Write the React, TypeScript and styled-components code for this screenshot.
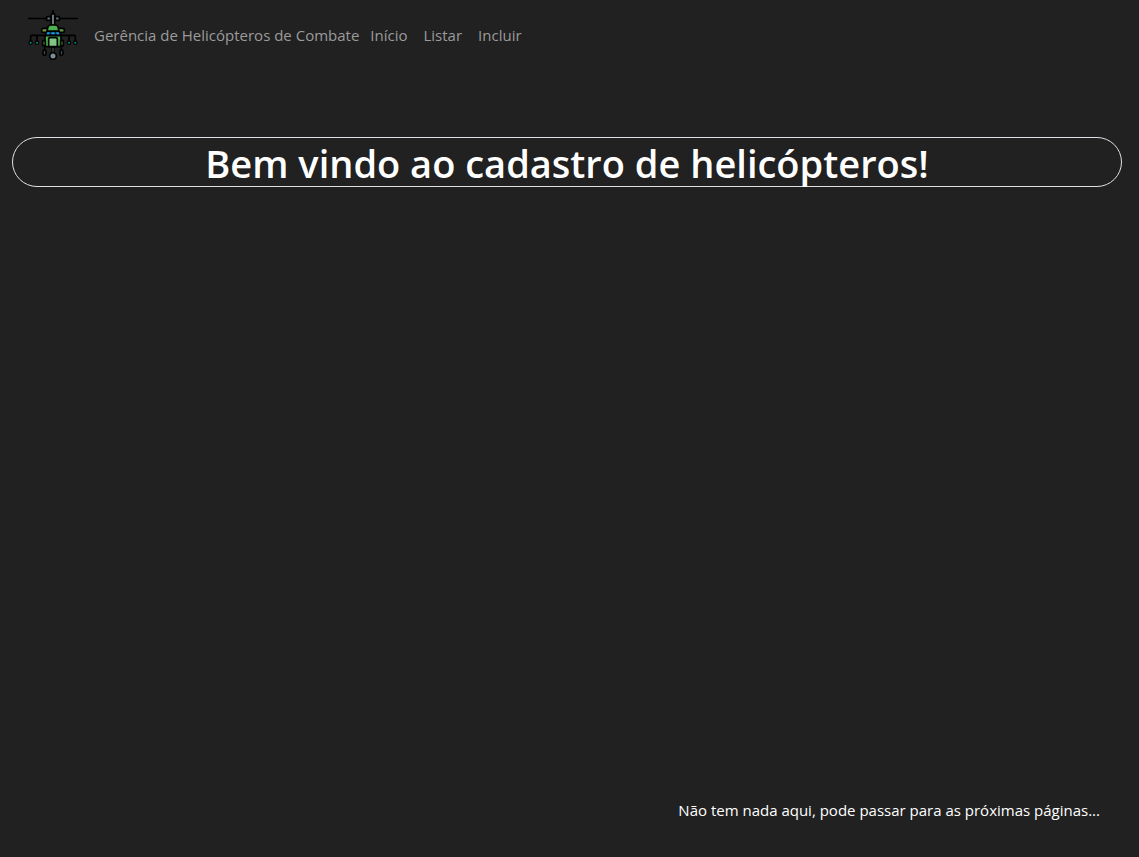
import React from "react";
import styled, { createGlobalStyle } from "styled-components";

const GlobalStyle = createGlobalStyle`
  *, *::before, *::after { box-sizing: border-box; }
  body {
    margin: 0;
    background: #212121;
    color: #ffffff;
    font-family: "Segoe UI", "Open Sans", "Noto Sans", sans-serif;
    font-size: 15px;
    line-height: 24px;
  }
`;

const Page = styled.div`
  min-height: 100vh;
  display: flex;
  flex-direction: column;
`;

const Navbar = styled.nav`
  display: flex;
  align-items: center;
  gap: 3px;
  padding: 10px 28px;
`;

const Brand = styled.a`
  display: flex;
  align-items: center;
  gap: 16px;
  color: #9b9b9b;
  text-decoration: none;
`;

const NavList = styled.ul`
  display: flex;
  margin: 0;
  padding: 0;
  list-style: none;
`;

const NavLink = styled.a`
  display: block;
  padding: 8px;
  color: #9b9b9b;
  text-decoration: none;
`;

const Main = styled.main`
  flex: 1;
  padding: 67px 17px 0 12px;
`;

const Title = styled.h1`
  margin: 0;
  padding-top: 2px;
  border: 1px solid #dee2e6;
  border-radius: 25px;
  font-size: 38px;
  line-height: 46px;
  font-weight: 600;
  text-align: center;
`;

const Footer = styled.footer`
  padding: 0 39px 35px;
  text-align: right;
`;

const Helicopter = () => (
  <svg width="50" height="50" viewBox="24 18 150 150" aria-hidden="true">
    <g stroke="#000000" strokeWidth="5" strokeLinejoin="round" strokeLinecap="round">
      <path d="M26 43.5H80M118 43.5H172" fill="none" />
      <path d="M99 21V32" fill="none" strokeWidth="6" />
      <rect x="80" y="38" width="12" height="11" rx="2" fill="#607886" />
      <rect x="106" y="38" width="12" height="11" rx="2" fill="#607886" />
      <path d="M94 30H104V64H94Z" fill="#858d93" />
      <path d="M32 112V97Q32 94 36 94H162Q166 94 166 97V112M51 94V112M147 94V112" fill="none" />
      <rect x="65" y="73" width="20" height="12" rx="5" fill="#689f38" />
      <rect x="113" y="73" width="20" height="12" rx="5" fill="#689f38" />
      <path d="M84 68Q87 63 93 63H105Q111 63 114 68L117 82H81Z" fill="#4caf50" />
      <path d="M81 82H117L122 94H76Z" fill="#0b2b3e" />
      <path d="M75 95H123V122Q123 128 117 128H81Q75 128 75 122Z" fill="#4caf50" />
      <path d="M86 128V105Q86 101 90 101H108Q112 101 112 105V128Z" fill="#81c784" />
      <rect x="68" y="110" width="8" height="15" fill="#558b2f" />
      <rect x="122" y="110" width="8" height="15" fill="#558b2f" />
      <path d="M74 126V138M124 126V138" fill="none" />
      <rect x="69" y="138" width="9" height="16" rx="4" fill="#37474f" />
      <rect x="120" y="138" width="9" height="16" rx="4" fill="#37474f" />
      <path d="M96 130H102V147H96Z" fill="#8a949b" strokeWidth="4" />
      <circle cx="99" cy="156" r="10" fill="#78909c" />
      <g fill="#009688" strokeWidth="4">
        <circle cx="32" cy="116" r="5" />
        <circle cx="51" cy="116" r="5" />
        <circle cx="147" cy="116" r="5" />
        <circle cx="166" cy="116" r="5" />
      </g>
    </g>
    <path d="M82 85H90L88 91H79ZM94 85H104V91H94ZM108 85H116L119 91H110Z" fill="#159bea" />
  </svg>
);

const links = ["Início", "Listar", "Incluir"];

export default function App() {
  return (
    <Page>
      <GlobalStyle />
      <Navbar>
        <Brand href="#">
          <Helicopter />
          Gerência de Helicópteros de Combate
        </Brand>
        <NavList>
          {links.map((label) => (
            <li key={label}>
              <NavLink href="#">{label}</NavLink>
            </li>
          ))}
        </NavList>
      </Navbar>
      <Main>
        <Title>Bem vindo ao cadastro de helicópteros!</Title>
      </Main>
      <Footer>Não tem nada aqui, pode passar para as próximas páginas...</Footer>
    </Page>
  );
}
